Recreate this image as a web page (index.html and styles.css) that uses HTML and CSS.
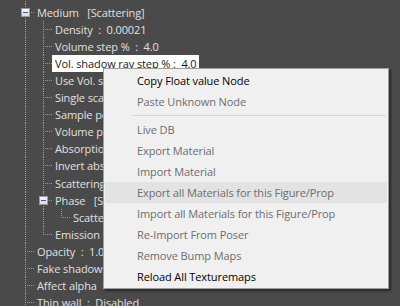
FILE: index.html
```html
<!DOCTYPE html>
<html lang="en">
<head>
    <meta charset="UTF-8">
    <title>Material Tree</title>
    <link rel="stylesheet" href="styles.css">
</head>
<body>
    <div class="panel">
        <div class="tree">
            <div class="row"><span class="g tee"></span><span class="label">Surface</span></div>
            <div class="row"><span class="g tee"><span class="box"></span></span><span class="label">Medium&nbsp;&nbsp; [Scattering]</span></div>
            <div class="row"><span class="g pipe"></span><span class="g tee"></span><span class="label">Density&nbsp; :&nbsp; 0.00021</span></div>
            <div class="row"><span class="g pipe"></span><span class="g tee"></span><span class="label">Volume step %&nbsp; :&nbsp; 4.0</span></div>
            <div class="row"><span class="g pipe"></span><span class="g tee"></span><span class="label selected">Vol. shadow ray step %&nbsp;:&nbsp; 4.0</span></div>
            <div class="row"><span class="g pipe"></span><span class="g tee"></span><span class="label">Use Vol. shadow ray step&nbsp; :&nbsp; On</span></div>
            <div class="row"><span class="g pipe"></span><span class="g tee"></span><span class="label">Single scattering&nbsp; :&nbsp; On</span></div>
            <div class="row"><span class="g pipe"></span><span class="g tee"></span><span class="label">Sample per pixel&nbsp; :&nbsp; 1</span></div>
            <div class="row"><span class="g pipe"></span><span class="g tee"></span><span class="label">Volume padding&nbsp; :&nbsp; 0.0</span></div>
            <div class="row"><span class="g pipe"></span><span class="g tee"></span><span class="label">Absorption&nbsp; :&nbsp; 1.0</span></div>
            <div class="row"><span class="g pipe"></span><span class="g tee"></span><span class="label">Invert absorption&nbsp; :&nbsp; Off</span></div>
            <div class="row"><span class="g pipe"></span><span class="g tee"></span><span class="label">Scattering&nbsp; :&nbsp; 1.0</span></div>
            <div class="row"><span class="g pipe"></span><span class="g tee"><span class="box"></span></span><span class="label">Phase&nbsp;&nbsp; [Schlick]</span></div>
            <div class="row"><span class="g pipe"></span><span class="g pipe"></span><span class="g elbow"></span><span class="label">Scattering phase&nbsp; :&nbsp; 0.0</span></div>
            <div class="row"><span class="g pipe"></span><span class="g elbow"></span><span class="label">Emission</span></div>
            <div class="row"><span class="g tee"></span><span class="label">Opacity&nbsp; :&nbsp; 1.0</span></div>
            <div class="row"><span class="g tee"></span><span class="label">Fake shadows&nbsp; :&nbsp; Off</span></div>
            <div class="row"><span class="g tee"></span><span class="label">Affect alpha</span></div>
            <div class="row"><span class="g tee"></span><span class="label">Thin wall&nbsp; :&nbsp; Disabled</span></div>
            <div class="row"><span class="g tee"></span><span class="label">Bump</span></div>
        </div>

        <!-- Context menu over the tree -->
        <div class="menu">
            <div class="item">Copy Float value Node</div>
            <div class="item off">Paste Unknown Node</div>
            <div class="sep"></div>
            <div class="item off">Live DB</div>
            <div class="item off">Export Material</div>
            <div class="item off">Import Material</div>
            <div class="item off hover">Export all Materials for this Figure/Prop</div>
            <div class="item off">Import all Materials for this Figure/Prop</div>
            <div class="item off">Re-Import From Poser</div>
            <div class="item off">Remove Bump Maps</div>
            <div class="item">Reload All Texturemaps</div>
        </div>
    </div>
</body>
</html>
```

FILE: styles.css
```css
body {
    margin: 0;
    padding: 0;
    font-family: 'Open Sans', 'Noto Sans', sans-serif;
    font-size: 11px;
    letter-spacing: -0.1px;
}

.panel {
    position: relative;
    width: 400px;
    height: 306px;
    overflow: hidden;
    background-color: #4a4a4a;
}

.tree {
    margin-top: -13.5px;
    padding-left: 16px;
    color: #e0e0e0;
}

.row {
    display: flex;
    height: 17.1px;
    line-height: 17px;
    white-space: nowrap;
}

/* guide cells for the dotted tree lines */
.g {
    position: relative;
    flex: none;
    width: 18px;
    height: 17.1px;
    background-repeat: no-repeat;
}

.pipe {
    background-image: repeating-linear-gradient(to bottom, #9a9a9a 0 1px, transparent 1px 2px);
    background-size: 1px 18px;
    background-position: 9px 0;
}

.tee {
    background-image:
        repeating-linear-gradient(to bottom, #9a9a9a 0 1px, transparent 1px 2px),
        repeating-linear-gradient(to right, #9a9a9a 0 1px, transparent 1px 2px);
    background-size: 1px 18px, 9px 1px;
    background-position: 9px 0, 9px 8px;
}

.elbow {
    background-image:
        repeating-linear-gradient(to bottom, #9a9a9a 0 1px, transparent 1px 2px),
        repeating-linear-gradient(to right, #9a9a9a 0 1px, transparent 1px 2px);
    background-size: 1px 9px, 9px 1px;
    background-position: 9px 0, 9px 8px;
}

.box {
    position: absolute;
    left: 5px;
    top: 4px;
    width: 7px;
    height: 7px;
    border: 1px solid #9c9c9c;
    background: linear-gradient(#f6f6fa, #d8dce8);
}

.box::after {
    content: '';
    position: absolute;
    left: 1px;
    top: 3px;
    width: 5px;
    height: 1px;
    background-color: #3d5a96;
}

.label {
    padding: 0 2px 0 3px;
}

.label.selected {
    background-color: #ffffff;
    color: #1a1a1a;
}

.menu {
    position: absolute;
    left: 103px;
    top: 68px;
    width: 284px;
    padding: 1px 0;
    background-color: #f0f0f0;
    border: 1px solid #a0a0a0;
    box-shadow: 2px 2px 2px rgba(0, 0, 0, 0.45);
    color: #000000;
}

.item {
    height: 21px;
    line-height: 21px;
    margin: 0 1px;
    padding-left: 32px;
    white-space: nowrap;
}

.item.off {
    color: #6d6d6d;
}

.item.hover {
    background-color: #e3e3e3;
}

.sep {
    height: 1px;
    margin: 3px 2px 3px 29px;
    background-color: #d7d7d7;
}
```
